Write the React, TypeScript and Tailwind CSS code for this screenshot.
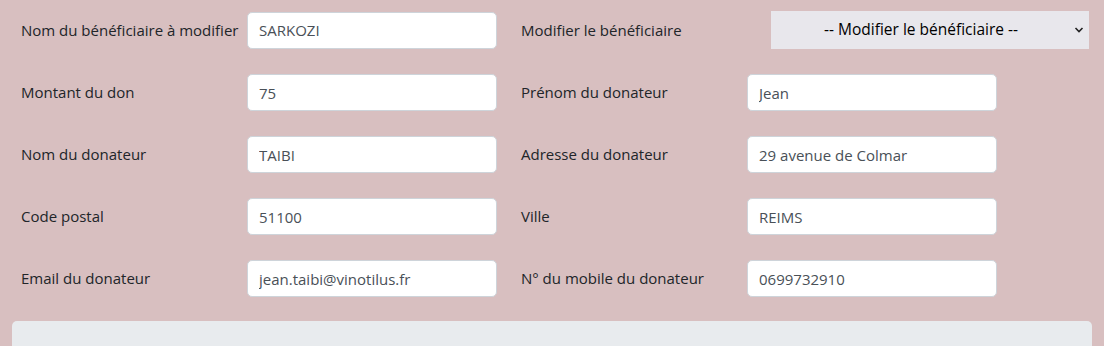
import React from 'react';

type Field = { label: string; value: string };

const rows: [Field, Field][] = [
  [
    { label: 'Montant du don', value: '75' },
    { label: 'Prénom du donateur', value: 'Jean' },
  ],
  [
    { label: 'Nom du donateur', value: 'TAIBI' },
    { label: 'Adresse du donateur', value: '29 avenue de Colmar' },
  ],
  [
    { label: 'Code postal', value: '51100' },
    { label: 'Ville', value: 'REIMS' },
  ],
  [
    { label: 'Email du donateur', value: 'jean.taibi@vinotilus.fr' },
    { label: 'N° du mobile du donateur', value: '0699732910' },
  ],
];

function TextInput({ value }: { value: string }) {
  return (
    <input
      type="text"
      defaultValue={value}
      className="h-[37px] w-[250px] rounded-[5px] border border-[#ced4da] bg-white px-[11px] text-[15px] text-[#495057] outline-none"
    />
  );
}

export default function App() {
  return (
    <div
      className="min-h-[346px] w-full bg-[#d8bfc0] pt-[11px]"
      style={{ fontFamily: '"Open Sans", "Noto Sans", sans-serif' }}
    >
      <div className="flex flex-col gap-[25px] pl-[21px]">
        {/* first row : beneficiary */}
        <div className="flex items-center">
          <label className="w-[226px] text-[15px] text-[#212529]">Nom du bénéficiaire à modifier</label>
          <TextInput value="SARKOZI" />
          <label className="ml-[24px] w-[250px] text-[15px] text-[#212529]">Modifier le bénéficiaire</label>
          <div className="relative">
            <select className="h-[38px] w-[318px] appearance-none bg-[#e8e7ec] pl-[12px] pr-[30px] text-center text-[15.5px] text-black outline-none">
              <option>-- Modifier le bénéficiaire --</option>
            </select>
            <svg
              className="pointer-events-none absolute right-[5px] top-[15px]"
              width="10"
              height="8"
              viewBox="0 0 10 8"
              fill="none"
              stroke="#222"
              strokeWidth="1.6"
            >
              <path d="M1.5 2l3.5 3.5L8.5 2" />
            </svg>
          </div>
        </div>

        {rows.map(([left, right]) => (
          <div key={left.label} className="flex items-center">
            <label className="w-[226px] text-[15px] text-[#212529]">{left.label}</label>
            <TextInput value={left.value} />
            <label className="ml-[24px] w-[226px] text-[15px] text-[#212529]">{right.label}</label>
            <TextInput value={right.value} />
          </div>
        ))}
      </div>

      <div className="mx-[12px] mt-[24px] h-[40px] rounded-t-[5px] bg-[#e8ebee]" />
    </div>
  );
}
